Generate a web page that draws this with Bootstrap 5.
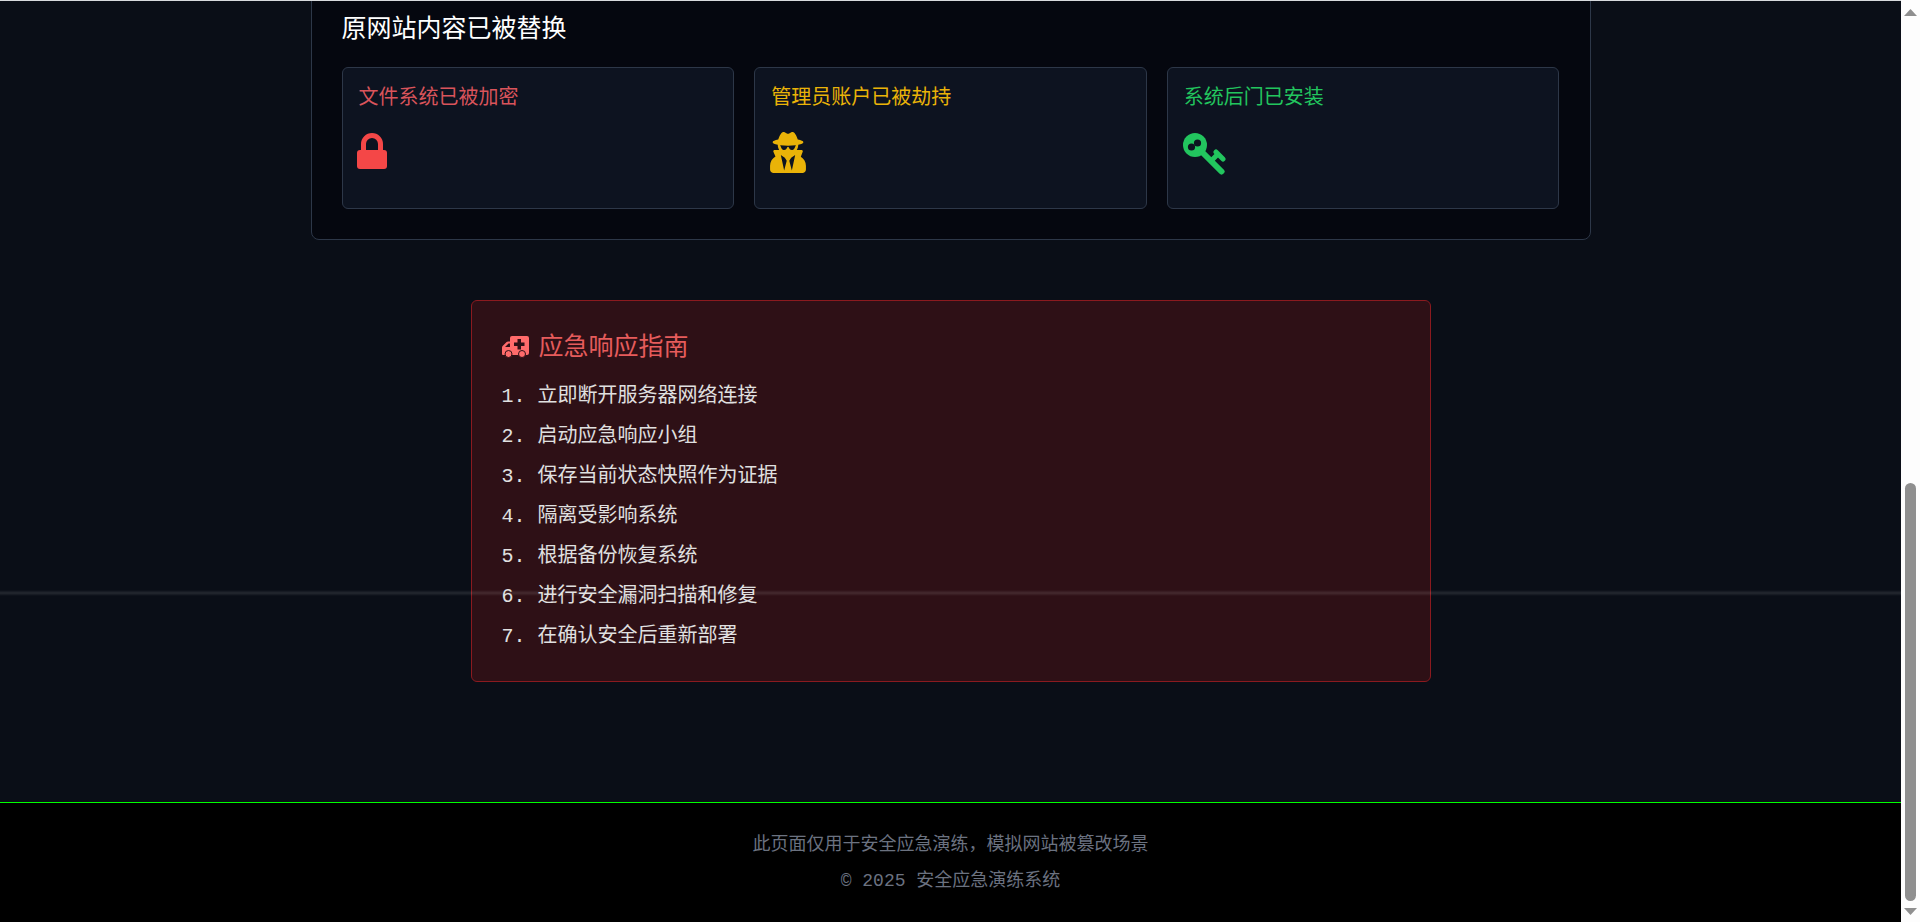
<!DOCTYPE html>
<html lang="zh-CN">
<head>
  <meta charset="UTF-8">
  <meta name="viewport" content="width=device-width, initial-scale=1.0">
  <title>安全应急演练系统</title>
  <link href="https://cdn.jsdelivr.net/npm/bootstrap@5.3.0/dist/css/bootstrap.min.css" rel="stylesheet">
  <script src="https://cdn.jsdelivr.net/npm/bootstrap@5.3.0/dist/js/bootstrap.bundle.min.js"></script>
  <style>
    html, body { height: 100%; overflow: hidden; }
    body {
      background-color: #0a0e17;
      color: #e0e0e0;
      font-family: "Liberation Mono", "Noto Sans CJK SC", monospace;
    }

    .page-frame { height: 922px; }
    .page-view {
      min-width: 0;
      overflow: hidden;
      border-top: 1px solid #d8dadd;
    }
    .scan-line {
      position: absolute;
      top: 589px;
      left: 0;
      right: 0;
      height: 6px;
      background: linear-gradient(to bottom, transparent, rgba(255, 255, 255, .11), transparent);
      pointer-events: none;
    }

    /* drawn scrollbar, the page sits scrolled to its end */
    .scroll-rail {
      flex: 0 0 19px;
      padding-top: 9px;
      background-color: #fdfdfd;
    }
    .rail-arrow { display: block; width: 13px; height: 7px; fill: #8f8f8f; }
    .rail-thumb {
      width: 11px;
      height: 418px;
      margin: 467px 0 7px;
      background-color: #8f8f8f;
      border-radius: 6px;
    }

    .defaced-panel {
      flex-shrink: 0;
      width: 1280px;
      margin: 0 auto;
      padding: 30px;
      background-color: #05070f;
      border: 1px solid #2d3748;
      border-radius: 8px;
    }
    .defaced-title {
      font-size: 25px;
      line-height: 30px;
      color: #fff;
      margin-bottom: 21px;
      font-weight: 400;
    }
    .threat-row { --bs-gutter-x: 20px; --bs-gutter-y: 0; }
    .threat-box {
      height: 142px;
      padding: 19px 16px 0;
      background-color: #0d1320;
      border: 1px solid #2d3748;
      border-radius: 6px;
    }
    .threat-name {
      font-size: 20px;
      line-height: 24px;
      font-weight: 400;
      margin-bottom: 22px;
    }
    .threat-red { color: #d9545b; }
    .threat-yellow { color: #eab308; }
    .threat-green { color: #22c55e; }
    .icon-lock { display: block; width: 30px; height: 36px; margin: 3px 0 0 -2px; color: #f44747; }
    .icon-secret { display: block; width: 36px; height: 41px; margin: -1px 0 0 -1px; color: #eab308; }
    .icon-key { display: block; width: 43px; height: 42px; margin: 3px 0 0 -1px; color: #22c55e; }

    .guide-panel {
      flex-shrink: 0;
      width: 960px;
      height: 382px;
      margin: 60px auto 120px;
      padding: 33px 30px 0;
      background-color: #2e1016;
      border: 1px solid #8b1a1f;
      border-radius: 6px;
    }
    .guide-title {
      font-size: 25px;
      line-height: 30px;
      font-weight: 400;
      color: #e65c5c;
      margin-bottom: 13px;
    }
    .icon-ambulance { width: 27px; height: 22px; margin: 0 10px 4px 0; color: #ff6b6b; }
    .guide-steps {
      list-style: decimal inside;
      padding: 0;
      margin: 0;
      font-size: 20px;
      line-height: 40px;
      color: #e0e0e0;
    }

    .site-foot {
      flex-shrink: 0;
      height: 120px;
      padding-top: 24px;
      background-color: #000;
      border-top: 1px solid #00ff00;
      color: #6b7280;
      font-size: 18px;
      line-height: 36px;
      text-align: center;
    }
  </style>
</head>
<body>
  <div class="d-flex page-frame">
    <div class="page-view flex-grow-1 d-flex flex-column justify-content-end position-relative">
      <section class="defaced-panel">
        <h2 class="defaced-title">原网站内容已被替换</h2>
        <div class="row row-cols-3 threat-row">
          <div class="col">
            <div class="threat-box">
              <h3 class="threat-name threat-red">文件系统已被加密</h3>
              <svg class="icon-lock" viewBox="0 0 30 36" aria-hidden="true">
                <path d="M6.500 18V11a8.500 8.500 0 0 1 17 0V18" fill="none" stroke="currentColor" stroke-width="5"/>
                <rect y="17" width="30" height="19" rx="3" fill="currentColor"/>
              </svg>
            </div>
          </div>
          <div class="col">
            <div class="threat-box">
              <h3 class="threat-name threat-yellow">管理员账户已被劫持</h3>
              <svg class="icon-secret" viewBox="0 0 448 512" aria-hidden="true">
                <path fill="currentColor" d="M383.9 308.3l23.9-62.6c4-10.5-3.7-21.7-15-21.7h-58.5c11-18.9 17.8-40.6 17.8-64v-.3c39.2-7.8 64-19.1 64-31.7 0-13.3-27.3-25.1-70.1-33-9.2-32.8-27-65.8-40.6-82.8-9.5-11.9-25.9-15.6-39.5-8.8l-27.6 13.8c-9 4.5-19.6 4.5-28.6 0L182.1 3.4c-13.6-6.8-30-3.1-39.5 8.8-13.5 17-31.4 50-40.6 82.8-42.7 7.9-70 19.7-70 33 0 12.6 24.8 23.9 64 31.7v.3c0 23.4 6.8 45.1 17.8 64H56.3c-11.5 0-19.2 11.7-14.7 22.3l25.8 60.2C27.3 329.8 0 372.7 0 422.4v44.8C0 491.9 20.1 512 44.8 512h358.4c24.7 0 44.8-20.1 44.8-44.8v-44.8c0-48.4-25.8-90.4-64.1-114.1zM176 480l-41.6-192 49.6 32 24 40-32 120zm96 0l-32-120 24-40 49.6-32L272 480zm41.7-298.5c-3.9 11.9-7 24.6-16.5 33.4-10.1 9.3-48 22.4-64-25-2.8-8.4-15.4-8.4-18.3 0-17 50.2-56 32.4-64 25-9.5-8.8-12.7-21.5-16.5-33.4-.8-2.5-6.3-5.7-6.3-5.8v-10.8c28.3 3.6 61 5.8 96 5.8s67.7-2.1 96-5.8v10.8c-.1.1-5.6 3.2-6.4 5.8z"/>
              </svg>
            </div>
          </div>
          <div class="col">
            <div class="threat-box">
              <h3 class="threat-name threat-green">系统后门已安装</h3>
              <svg class="icon-key" viewBox="0 0 43 42" aria-hidden="true">
                <circle cx="12" cy="12" r="12" fill="currentColor"/>
                <circle cx="8.500" cy="14" r="3.600" fill="#0d1320"/>
                <circle cx="14.500" cy="10" r="3.600" fill="#0d1320"/>
                <g fill="none" stroke="currentColor" stroke-linecap="round">
                  <path d="M20 20L38.500 38.500" stroke-width="6"/>
                  <path d="M28 28L34 22" stroke-width="5"/>
                  <path d="M33 19L40 26" stroke-width="5"/>
                </g>
              </svg>
            </div>
          </div>
        </div>
      </section>

      <section class="guide-panel">
        <h3 class="guide-title d-flex align-items-center">
          <svg class="icon-ambulance" viewBox="0 0 27 22" aria-hidden="true">
            <path fill="currentColor" d="M10 0h15a2 2 0 0 1 2 2v15a2 2 0 0 1-2 2H1a1 1 0 0 1-1-1v-6.500a2 2 0 0 1 .6-1.400L4.600 6.100A2 2 0 0 1 6 5.500h2V2a2 2 0 0 1 2-2z"/>
            <path fill="#2e1016" d="M15.500 3h3.500v3.500h3.500v3.500H19v3.500h-3.500V10H12V6.500h3.500zM3 11l3.500-3.500H8V11z"/>
            <circle cx="6.500" cy="18" r="3.500" fill="currentColor" stroke="#2e1016" stroke-width="1"/>
            <circle cx="20" cy="18" r="3.500" fill="currentColor" stroke="#2e1016" stroke-width="1"/>
          </svg>
          应急响应指南
        </h3>
        <ol class="guide-steps">
          <li>立即断开服务器网络连接</li>
          <li>启动应急响应小组</li>
          <li>保存当前状态快照作为证据</li>
          <li>隔离受影响系统</li>
          <li>根据备份恢复系统</li>
          <li>进行安全漏洞扫描和修复</li>
          <li>在确认安全后重新部署</li>
        </ol>
      </section>

      <footer class="site-foot">
        <div>此页面仅用于安全应急演练，模拟网站被篡改场景</div>
        <div>© 2025 安全应急演练系统</div>
      </footer>

      <div class="scan-line"></div>
    </div>

    <div class="scroll-rail d-flex flex-column align-items-center">
      <svg class="rail-arrow" viewBox="0 0 13 7" aria-hidden="true"><path d="M6.500 0L13 7H0z"/></svg>
      <div class="rail-thumb"></div>
      <svg class="rail-arrow" viewBox="0 0 13 7" aria-hidden="true"><path d="M6.500 7L0 0H13z"/></svg>
    </div>
  </div>
</body>
</html>
